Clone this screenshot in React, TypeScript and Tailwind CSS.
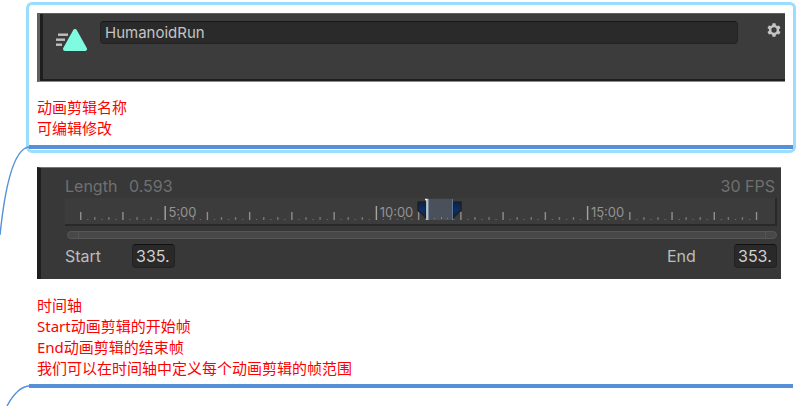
import { FC, ReactNode } from 'react';

const TICK_COUNT = 97;
const TRACK_WIDTH = 710;

const LABELS = [
  { at: 12, text: '5:00' },
  { at: 42, text: '10:00' },
  { at: 72, text: '15:00' },
];

const percent = (x: number) => `${(x / TRACK_WIDTH) * 100}%`;
const tickX = (index: number) => percent(15 + index * 7.04);

const tickStyle = (index: number) => {
  if (index % 30 === 12) return { height: 14, color: '#a4a4a4' };
  if (index % 6 === 0) return { height: 8, color: '#8e8e8e' };
  if (index % 2 === 0) return { height: 3, color: '#757575' };
  return { height: 1, color: '#686868' };
};

const ClipIcon: FC = () => (
  <svg className="h-6 w-8 shrink-0" viewBox="0 0 32 24" aria-hidden="true">
    <g stroke="#bfbfbf" strokeWidth="2.4">
      <path d="M2 5.7H12" />
      <path d="M0 10.7H9" />
      <path d="M0 15.7H6" />
    </g>
    <path
      d="M19 2L29 20H9Z"
      fill="#7ffbe0"
      stroke="#7ffbe0"
      strokeWidth="4"
      strokeLinejoin="round"
    />
  </svg>
);

const GearIcon: FC = () => (
  <svg className="size-4" viewBox="0 0 24 24" fill="#c4c4c4" aria-hidden="true">
    <path
      fillRule="evenodd"
      d="M9.8 2h4.4l.6 3 1.9 1.1 2.9-1 2.2 3.8L19.5 11v2l2.3 2.1-2.2 3.8-2.9-1-1.9 1.1-.6 3H9.8l-.6-3-1.9-1.1-2.9 1-2.2-3.8L4.5 13v-2L2.2 8.9l2.2-3.8 2.9 1L9.2 5ZM12 8a4 4 0 1 0 0 8a4 4 0 0 0 0-8Z"
    />
  </svg>
);

const Timeline: FC = () => (
  <div className="border-r-2 border-b-2 border-[#292929] bg-[#3c3c3c]">
    <svg className="block h-[26px] w-full overflow-visible" role="img" aria-label="Timeline">
      {Array.from({ length: TICK_COUNT }, (_, index) => {
        const { height, color } = tickStyle(index);
        return (
          <rect key={index} x={tickX(index)} y={22 - height} width="1.4" height={height} fill={color} />
        );
      })}
      {LABELS.map(({ at, text }) => (
        <text
          key={text}
          x={tickX(at)}
          y="19"
          dx="4"
          className="fill-[#939393] font-['Inter',sans-serif] text-[13px]"
        >
          {text}
        </text>
      ))}
      <svg x={percent(352)} y="0" width="46" height="24" overflow="visible">
        <defs>
          <linearGradient id="handle" x1="0" y1="0" x2="0" y2="1">
            <stop offset="0" stopColor="#0b2147" />
            <stop offset="0.5" stopColor="#0d2f66" />
            <stop offset="1" stopColor="#1c2027" />
          </linearGradient>
        </defs>
        <rect x="10" y="1" width="26" height="21" fill="#4b515b" />
        <path d="M17 20h1v1h-1zM24 19h1v2h-1zM30 20h1v1h-1z" fill="#808080" />
        <path d="M1 4H9V20L1 12Z" fill="url(#handle)" stroke="#1c2027" strokeWidth="1.5" />
        <path d="M36 4H44V12L36 20Z" fill="url(#handle)" stroke="#1c2027" strokeWidth="1.5" />
        <path d="M35.5 1V22" stroke="#61799b" />
        <path d="M11.5 1V22" stroke="#71869f" />
        <path d="M8 1.5H10V22" fill="none" stroke="#f2f2f2" strokeWidth="1.4" />
      </svg>
    </svg>
  </div>
);

const FrameField: FC<{ id: string; label: string; value: string }> = ({ id, label, value }) => (
  <div className="flex items-center justify-between">
    <label htmlFor={id} className="w-[67px]">
      {label}
    </label>
    <input
      id={id}
      defaultValue={value}
      className="h-6 w-[43px] rounded border border-[#222222] border-t-[#111111] bg-[#292929] px-[3px] text-[#d0d0d0] outline-none"
    />
  </div>
);

const Note: FC<{ lines: string[] }> = ({ lines }) => (
  <div className="font-['Noto_Sans','Noto_Sans_CJK_SC',sans-serif] text-[15px] leading-[21px] text-[#ff0000]">
    {lines.map((line) => (
      <p key={line}>{line}</p>
    ))}
  </div>
);

const Topic: FC<{ children: ReactNode; className: string }> = ({ children, className }) => (
  <section className={`border-b-4 border-[#5590d9] px-2 ${className}`}>{children}</section>
);

const App: FC = () => {
  return (
    <main className="relative overflow-hidden bg-white pt-[2px] pr-[11px] pb-[18px] pl-[26px] font-['Inter',sans-serif] text-base">
      <div className="rounded-md border-[3px] border-[#99ddff] pb-px">
        <Topic className="pt-2">
          <div className="border-t border-b border-l-[3px] border-[#606060] border-b-[#8a8a8a]">
            <div className="flex h-[67px] items-start border-b-2 border-l-[3px] border-[#1e1e1e] bg-[#3c3c3c] pt-[7px] pl-[13px]">
              <div className="pt-2">
                <ClipIcon />
              </div>
              <input
                aria-label="Clip name"
                defaultValue="HumanoidRun"
                className="ml-3 h-[23px] min-w-0 flex-1 rounded border border-[#242424] border-t-[#161616] bg-[#2a2a2a] px-1 text-[15px] text-[#c4c4c4] outline-none"
              />
              <button aria-label="Options" className="mr-[3px] ml-7 pt-px">
                <GearIcon />
              </button>
            </div>
          </div>
          <div className="pt-[15px] pb-[6px]">
            <Note lines={['动画剪辑名称', '可编辑修改']} />
          </div>
        </Topic>
      </div>

      <div className="px-[3px] pt-[14px]">
        <Topic className="pr-3">
          <div className="border-t border-l-4 border-t-[#777777] border-l-[#1e1e1e] bg-[#383838] pr-1 pb-[11px] pl-6">
            <div className="flex justify-between pt-[7px] pb-px leading-[22px] text-[#707070]">
              <div className="flex">
                <span className="w-16">Length</span>
                <span>0.593</span>
              </div>
              <span className="pr-[2px]">30 FPS</span>
            </div>
            <Timeline />
            <div className="mt-[5px] ml-[2px] flex h-2 justify-between rounded-full border border-[#565656] bg-[#484848] px-[10px]">
              <span className="w-px bg-[#555555]" />
              <span className="w-px bg-[#555555]" />
            </div>
            <div className="flex justify-between pt-[5px] text-[#bdbdbd]">
              <FrameField id="start" label="Start" value="335." />
              <FrameField id="end" label="End" value="353." />
            </div>
          </div>
          <div className="pt-4 pb-[5px]">
            <Note
              lines={[
                '时间轴',
                'Start动画剪辑的开始帧',
                'End动画剪辑的结束帧',
                '我们可以在时间轴中定义每个动画剪辑的帧范围',
              ]}
            />
          </div>
        </Topic>
      </div>

      {/* branches leading to each topic */}
      <svg
        className="pointer-events-none absolute top-0 left-0 h-full w-[30px]"
        fill="none"
        stroke="#5590d9"
        strokeWidth="1.4"
        aria-hidden="true"
      >
        <path d="M30 147C16 147 6 177 0 235" />
        <path d="M30 386C21 386 14 393 7 406" />
      </svg>
    </main>
  );
};

export default App;
